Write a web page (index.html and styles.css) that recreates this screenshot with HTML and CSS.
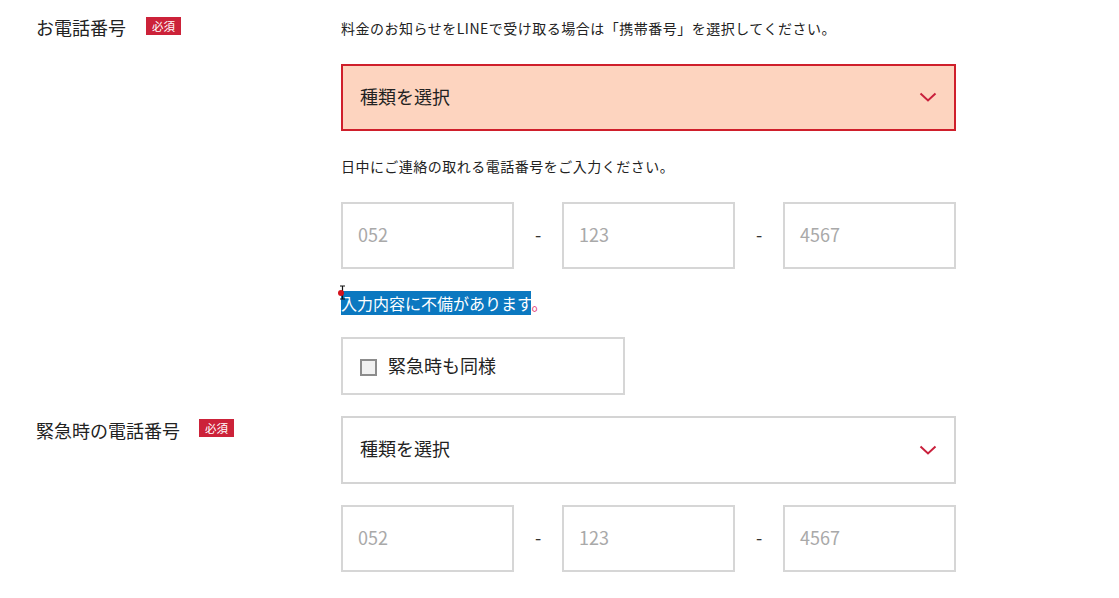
FILE: index.html
```html
<!DOCTYPE html>
<html lang="ja">
<head>
<meta charset="utf-8">
<title>お電話番号</title>
<link rel="stylesheet" href="styles.css">
</head>
<body>
<form class="form">
  <div class="row row-first">
    <div class="label-col label-first">
      <span class="label">お電話番号</span><span class="badge">必須</span>
    </div>
    <div class="field-col">
      <p class="note note-top">料金のお知らせをLINEで受け取る場合は「携帯番号」を選択してください。</p>
      <div class="select select-error">
        <span class="select-text">種類を選択</span>
        <svg class="chevron" width="18" height="11" viewBox="0 0 18 11"><polyline points="1.5,1.5 9,8.5 16.5,1.5" fill="none" stroke="#c9203c" stroke-width="2"/></svg>
      </div>
      <p class="note note-mid">日中にご連絡の取れる電話番号をご入力ください。</p>
      <div class="tel-row">
        <div class="tel-input"><span class="ph">052</span></div>
        <span class="dash">-</span>
        <div class="tel-input"><span class="ph">123</span></div>
        <span class="dash">-</span>
        <div class="tel-input"><span class="ph">4567</span></div>
      </div>
      <p class="error"><span class="sel">入力内容に不備があります</span><span class="dot">。</span><svg class="caret" width="10" height="18" viewBox="0 0 10 18"><path d="M2 1h5M4.5 1v13M2 14h5" stroke="#111" stroke-width="1.2" fill="none"/><circle cx="3" cy="8" r="3" fill="#d4121c"/></svg></p>
      <label class="same-box">
        <span class="checkbox"></span>
        <span class="same-text">緊急時も同様</span>
      </label>
    </div>
  </div>
  <div class="row row-second">
    <div class="label-col label-second">
      <span class="label">緊急時の電話番号</span><span class="badge">必須</span>
    </div>
    <div class="field-col">
      <div class="select select-plain">
        <span class="select-text">種類を選択</span>
        <svg class="chevron" width="18" height="11" viewBox="0 0 18 11"><polyline points="1.5,1.5 9,8.5 16.5,1.5" fill="none" stroke="#c9203c" stroke-width="2"/></svg>
      </div>
      <div class="tel-row tel-row-second">
        <div class="tel-input"><span class="ph">052</span></div>
        <span class="dash">-</span>
        <div class="tel-input"><span class="ph">123</span></div>
        <span class="dash">-</span>
        <div class="tel-input"><span class="ph">4567</span></div>
      </div>
    </div>
  </div>
</form>
</body>
</html>
```
FILE: styles.css
```css
* { box-sizing: border-box; }
html, body { margin: 0; padding: 0; background: #fff; }
body {
  font-family: "Noto Sans CJK JP", "Noto Sans", sans-serif;
  color: #222;
  width: 1119px;
  height: 598px;
  overflow: hidden;
}
.form { display: flex; flex-direction: column; }
.row { display: grid; grid-template-columns: 341px 615px; }
.row-second { margin-top: 21px; }
.label-col { display: flex; align-items: center; padding-left: 36px; height: 24px; }
.label-first { margin-top: 15px; }
.label-second { margin-top: 2px; }
.label { font-size: 18px; line-height: 24px; color: #222; }
.badge {
  display: inline-flex; align-items: center; justify-content: center;
  width: 35px; height: 18px; margin-left: 20px; margin-top: -3px;
  background: #cc2239; color: #fff; font-size: 11.5px; line-height: 18px;
}
.label-second .badge { margin-left: 19px; margin-top: -4px; }
.field-col { display: flex; flex-direction: column; }
.note { margin: 0; font-size: 14px; line-height: 24px; color: #222; letter-spacing: 0.5px; }
.note-top { margin-top: 16px; }
.note-mid { margin-top: 23px; }
.select {
  display: flex; align-items: center; justify-content: space-between;
  height: 67px; padding: 0 17px 0 17px;
  border: 2px solid #d4d4d4; background: #fff;
}
.note-top + .select { margin-top: 24px; }
.select-error { background: #fdd4bf; border-color: #cf1f2b; }
.select-plain { height: 68px; }
.select-text { font-size: 18px; line-height: 24px; color: #222; margin-bottom: 4px; }
.chevron { display: block; margin-top: 0; }
.tel-row { display: flex; align-items: center; margin-top: 24px; }
.tel-row-second { margin-top: 21px; }
.tel-input {
  width: 173px; height: 67px; border: 2px solid #d6d6d6;
  display: flex; align-items: center; padding-left: 15px;
}
.ph { font-size: 18px; line-height: 24px; color: #a9a9a9; margin-bottom: 4px; }
.dash { width: 48px; text-align: center; font-size: 18px; line-height: 24px; color: #333; margin-bottom: 4px; }
.error { position: relative; margin: 22px 0 0 0; font-size: 16px; line-height: 24px; height: 24px; }
.sel { background: #0b78c0; color: #fff; }
.dot { color: #e2306b; }
.caret { position: absolute; left: -3px; top: -6px; }
.same-box {
  display: flex; align-items: center; margin-top: 22px;
  width: 284px; height: 58px; border: 2px solid #d6d6d6; padding-left: 17px;
}
.checkbox {
  width: 17px; height: 17px; border: 2px solid #8c8c8c; background: #f1f1f1; margin-top: 2px;
}
.same-text { margin-left: 11px; font-size: 18px; line-height: 24px; color: #222; margin-bottom: 3px; }
```
